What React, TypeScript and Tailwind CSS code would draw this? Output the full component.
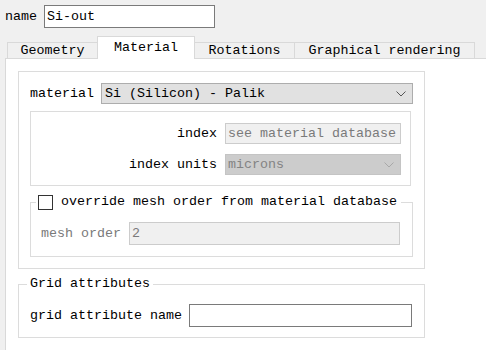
import React from "react"

function Chevron({ className = "" }: { className?: string }) {
  return (
    <svg width="10" height="6" viewBox="0 0 10 6" className={className}>
      <path d="M0.5 0.5 L5 5 L9.5 0.5" fill="none" stroke="currentColor" strokeWidth="1" />
    </svg>
  )
}

export default function App() {
  return (
    <div
      className="w-[486px] h-[350px] overflow-hidden bg-[#f0f0f0] text-[13.33px] leading-[16px] text-black"
      style={{ fontFamily: '"Liberation Mono", "DejaVu Sans Mono", monospace' }}
    >
      {/* name row */}
      <div className="flex items-center pt-[5px] pl-[5px]">
        <span>name</span>
        <div className="ml-[7px] flex h-[23px] w-[171px] items-center border border-[#7a7a7a] bg-white pl-[2px]">
          Si-out
        </div>
      </div>

      {/* tabs */}
      <div className="mt-[8px] flex items-end pl-[7px] whitespace-nowrap">
        <div className="flex h-[16px] w-[90px] items-center justify-center border-l border-t border-[#d9d9d9] bg-[#f0f0f0] pt-[1px]">
          Geometry
        </div>
        <div className="relative z-10 -mb-px flex h-[23px] w-[98px] items-start justify-center border-x border-t border-[#d9d9d9] bg-white pt-[3px]">
          Material
        </div>
        <div className="flex h-[16px] w-[100px] items-center justify-center border-r border-t border-[#d9d9d9] bg-[#f0f0f0] pt-[1px]">
          Rotations
        </div>
        <div className="flex h-[16px] w-[180px] items-center justify-center border-r border-t border-[#d9d9d9] bg-[#f0f0f0] pt-[1px]">
          Graphical rendering
        </div>
      </div>

      {/* pane */}
      <div className="ml-[5px] h-[300px] w-[500px] border-l border-t border-[#d9d9d9] bg-white pl-[12px] pt-[12px] whitespace-nowrap">
        {/* material group */}
        <div className="w-[407px] border border-[#dcdcdc] px-[11px] pb-[11px] pt-[11px]">
          <div className="flex items-center">
            <span>material</span>
            <div className="ml-[7px] flex h-[21px] w-[312px] items-center justify-between border border-[#adadad] bg-[#e1e1e1] pl-[3px] pr-[6px]">
              <span>Si (Silicon) - Palik</span>
              <Chevron className="text-[#555]" />
            </div>
          </div>

          <div className="mt-[7px] w-[381px] border border-[#dcdcdc] pb-[10px] pr-[9px] pt-[11px]">
            <div className="flex items-center justify-end">
              <span>index</span>
              <div className="ml-[8px] flex h-[21px] w-[176px] items-center border border-[#cccccc] bg-[#f0f0f0] pl-[2px] text-[#7a7a7a]">
                see material database
              </div>
            </div>
            <div className="mt-[10px] flex items-center justify-end">
              <span>index units</span>
              <div className="ml-[8px] flex h-[21px] w-[176px] items-center justify-between border border-[#c4c4c4] bg-[#cccccc] pl-[2px] pr-[6px] text-[#838383]">
                <span>microns</span>
                <Chevron className="text-[#a8a8a8]" />
              </div>
            </div>
          </div>

          <fieldset className="mt-[8px] w-[383px] min-w-0 border border-[#dcdcdc]">
            <legend className="ml-[5px] flex items-center whitespace-nowrap px-[2px]">
              <span className="h-[15px] w-[15px] shrink-0 border border-[#333] bg-white" />
              <span className="ml-[8px] pr-[2px]">override mesh order from material database</span>
            </legend>
            <div className="flex items-center pb-[11px] pl-[10px] pt-[12px] text-[#7a7a7a]">
              <span>mesh order</span>
              <div className="ml-[8px] flex h-[23px] w-[271px] items-center border border-[#cccccc] bg-[#f0f0f0] pl-[2px]">
                2
              </div>
            </div>
          </fieldset>
        </div>

        {/* grid attributes */}
        <fieldset className="mt-[7px] w-[407px] min-w-0 border border-[#dcdcdc]">
          <legend className="ml-[8px] px-[3px]">Grid attributes</legend>
          <div className="flex items-center pb-[10px] pl-[11px] pt-[12px]">
            <span>grid attribute name</span>
            <div className="ml-[7px] h-[23px] w-[223px] border border-[#7a7a7a] bg-white" />
          </div>
        </fieldset>
      </div>
    </div>
  )
}
